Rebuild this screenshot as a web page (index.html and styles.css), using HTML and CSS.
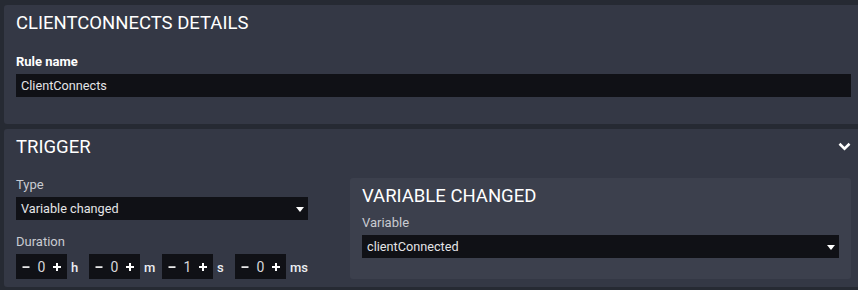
FILE: index.html
```html
<!DOCTYPE html>
<html lang="en">
<head>
    <meta charset="UTF-8">
    <meta name="viewport" content="width=device-width, initial-scale=1.0">
    <title>ClientConnects</title>
    <link rel="stylesheet" href="styles.css">
</head>
<body>
    <section class="panel panel-details">
        <h2 class="panel-title">CLIENTCONNECTS DETAILS</h2>
        <div class="field">
            <label class="field-label field-label-strong">Rule name</label>
            <div class="text-input">ClientConnects</div>
        </div>
    </section>

    <section class="panel panel-trigger">
        <div class="panel-header">
            <h2 class="panel-title">TRIGGER</h2>
            <svg class="chevron" width="13" height="9" viewBox="0 0 13 9">
                <path d="M1.5 1.8 L6.5 6.6 L11.5 1.8" fill="none" stroke="#fff" stroke-width="2.6"/>
            </svg>
        </div>
        <div class="trigger-grid">
            <div class="trigger-left">
                <div class="field field-first">
                    <label class="field-label">Type</label>
                    <div class="select">
                        <span>Variable changed</span>
                        <span class="select-arrow"></span>
                    </div>
                </div>
                <div class="field field-duration">
                    <label class="field-label">Duration</label>
                    <div class="duration">
                        <div class="duration-part">
                            <div class="spinner">
                                <svg class="spin-btn" width="8" height="8" viewBox="0 0 8 8"><rect x="0.5" y="3.3" width="7" height="1.6" fill="#fff"/></svg>
                                <span class="spin-value">0</span>
                                <svg class="spin-btn" width="8" height="8" viewBox="0 0 8 8"><rect x="0" y="3" width="8" height="2" fill="#fff"/><rect x="3" y="0" width="2" height="8" fill="#fff"/></svg>
                            </div>
                            <span class="unit">h</span>
                        </div>
                        <div class="duration-part">
                            <div class="spinner">
                                <svg class="spin-btn" width="8" height="8" viewBox="0 0 8 8"><rect x="0.5" y="3.3" width="7" height="1.6" fill="#fff"/></svg>
                                <span class="spin-value">0</span>
                                <svg class="spin-btn" width="8" height="8" viewBox="0 0 8 8"><rect x="0" y="3" width="8" height="2" fill="#fff"/><rect x="3" y="0" width="2" height="8" fill="#fff"/></svg>
                            </div>
                            <span class="unit">m</span>
                        </div>
                        <div class="duration-part">
                            <div class="spinner">
                                <svg class="spin-btn" width="8" height="8" viewBox="0 0 8 8"><rect x="0.5" y="3.3" width="7" height="1.6" fill="#fff"/></svg>
                                <span class="spin-value">1</span>
                                <svg class="spin-btn" width="8" height="8" viewBox="0 0 8 8"><rect x="0" y="3" width="8" height="2" fill="#fff"/><rect x="3" y="0" width="2" height="8" fill="#fff"/></svg>
                            </div>
                            <span class="unit">s</span>
                        </div>
                        <div class="duration-part">
                            <div class="spinner">
                                <svg class="spin-btn" width="8" height="8" viewBox="0 0 8 8"><rect x="0.5" y="3.3" width="7" height="1.6" fill="#fff"/></svg>
                                <span class="spin-value">0</span>
                                <svg class="spin-btn" width="8" height="8" viewBox="0 0 8 8"><rect x="0" y="3" width="8" height="2" fill="#fff"/><rect x="3" y="0" width="2" height="8" fill="#fff"/></svg>
                            </div>
                            <span class="unit">ms</span>
                        </div>
                    </div>
                </div>
            </div>
            <div class="subpanel">
                <h3 class="panel-title">VARIABLE CHANGED</h3>
                <div class="field field-variable">
                    <label class="field-label">Variable</label>
                    <div class="select">
                        <span>clientConnected</span>
                        <span class="select-arrow"></span>
                    </div>
                </div>
            </div>
        </div>
    </section>
</body>
</html>
```

FILE: styles.css
```css
body {
    margin: 0;
    padding: 5px 0 0 4px;
    background-color: #262a33;
    font-family: Roboto, "Liberation Sans", sans-serif;
    color: #fff;
}
.panel {
    background-color: #343845;
    border-radius: 3px 0 0 3px;
    padding: 7px 7px 0 12px;
}
.panel-details {
    height: 112px;
}
.panel-trigger {
    margin-top: 5px;
    padding-bottom: 8px;
}
.panel-title {
    margin: 0;
    font-size: 18.5px;
    line-height: 22px;
    font-weight: 400;
    color: #fff;
}
.panel-header {
    display: flex;
    justify-content: space-between;
    align-items: flex-start;
}
.chevron {
    margin-top: 6px;
}
.field {
    margin-top: 20px;
}
.field-label {
    display: block;
    font-size: 13px;
    line-height: 16px;
    color: #c9cbd1;
    margin-bottom: 4px;
}
.field-label-strong {
    font-weight: 700;
    color: #fff;
}
.text-input,
.select {
    height: 23px;
    background-color: #101116;
    color: #e4e4e6;
    font-size: 12.7px;
    line-height: 23px;
    padding: 0 5px;
}
.select {
    display: flex;
    justify-content: space-between;
    align-items: center;
    padding-right: 4px;
}
.select-arrow {
    width: 0;
    height: 0;
    border-left: 4px solid transparent;
    border-right: 4px solid transparent;
    border-top: 5px solid #fff;
    margin-top: 2px;
}
.trigger-grid {
    display: grid;
    grid-template-columns: 292px 1fr;
    column-gap: 42px;
    margin-top: 19px;
}
.field-first {
    margin-top: 0;
}
.field-duration {
    margin-top: 14px;
}
.duration {
    display: flex;
}
.duration-part {
    display: flex;
    width: 73px;
}
.spinner {
    width: 51px;
    height: 25px;
    box-sizing: border-box;
    background-color: #101116;
    display: flex;
    align-items: center;
    padding: 0 6px;
}
.spin-btn {
    flex: none;
    margin-top: 1px;
}
.spin-value {
    width: 23px;
    text-align: center;
    font-size: 14px;
    color: #d6d7db;
    margin-top: 1px;
}
.unit {
    padding-left: 4px;
    font-size: 13px;
    line-height: 17px;
    font-weight: 500;
    margin-top: 5px;
    color: #eceef2;
}
.subpanel {
    margin-top: 1px;
    background-color: #3c404d;
    border-radius: 3px;
    padding: 7px 12px 21px 12px;
}
.field-variable {
    margin-top: 8px;
}
```
